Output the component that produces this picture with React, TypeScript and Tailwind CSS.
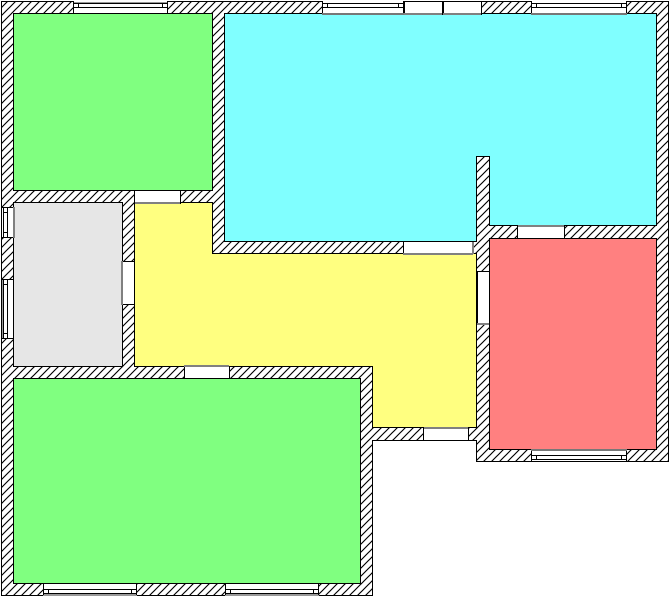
const hatchFill = 'url(#hatch)'

type Door = { x: number; y: number; w: number; h: number; grey: string }

// door openings: white gap with one grey jamb line
const doors: Door[] = [
  { x: 134, y: 190, w: 46, h: 13, grey: 'M135 203H180' },
  { x: 122, y: 261, w: 12, h: 43, grey: 'M122 261V305' },
  { x: 403, y: 241, w: 70, h: 12, grey: 'M403 254H473M473 242V254' },
  { x: 517, y: 225, w: 47, h: 13, grey: 'M518 226H564' },
  { x: 477, y: 271, w: 12, h: 53, grey: 'M477 324H489' },
  { x: 184, y: 366, w: 45, h: 12, grey: 'M184 366H229' },
  { x: 423, y: 428, w: 45, h: 12, grey: 'M424 428H468' },
  { x: 404, y: 1, w: 38, h: 13, grey: 'M404 14H442' },
  { x: 443, y: 1, w: 38, h: 13, grey: 'M443 14H481' },
]

const Window = ({ x, w, wall, inner, greyInner }: { x: number; w: number; wall: number; inner: number; greyInner?: boolean }) => {
  const dir = inner > wall ? 1 : -1
  const top = Math.min(wall, inner)
  const y = (n: number) => wall + dir * n + 0.5
  return (
    <g>
      <rect x={x} y={top} width={w} height={12} fill="#fff" />
      {greyInner ? (
        <path d={`M${x} ${y(2)}H${x + w}`} stroke="#000" />
      ) : (
        <path d={`M${x} ${y(1)}H${x + w}`} stroke="#999" strokeWidth={2} />
      )}
      <path d={`M${x} ${y(2)}H${x + w}M${x} ${y(6)}H${x + w}`} stroke="#000" />
      <path d={`M${x + 5.5} ${y(2)}V${y(6)}M${x + w - 5.5} ${y(2)}V${y(6)}`} stroke="#000" />
      <path d={`M${x + 0.5} ${top}V${top + 12}M${x + w - 0.5} ${top}V${top + 12}`} stroke="#000" />
      <path d={`M${x} ${y(12)}H${x + w}`} stroke={greyInner ? '#777' : '#000'} strokeWidth={greyInner ? 2 : 1} />
    </g>
  )
}

const SideWindow = ({ y, h, greyOuter }: { y: number; h: number; greyOuter?: boolean }) => (
  <g>
    <rect x={2} y={y} width={11} height={h} fill="#fff" />
    {greyOuter && <path d={`M3 ${y}V${y + h}`} stroke="#999" strokeWidth={2} />}
    <path d={`M3.5 ${y}V${y + h}M7.5 ${y}V${y + h}M2 ${y + 0.5}H13M2 ${y + h - 0.5}H13M3 ${y + 5.5}H8M3 ${y + h - 5.5}H8`} stroke="#000" fill="none" />
    {greyOuter ? (
      <path d={`M13.5 ${y}V${y + h}`} stroke="#000" />
    ) : (
      <path d={`M14 ${y}V${y + h}`} stroke="#808080" strokeWidth={2} />
    )}
  </g>
)

export default function App() {
  return (
    <div className="w-[670px] h-[597px] bg-white overflow-hidden">
      <svg width="670" height="597" viewBox="0 0 670 597" className="block" shapeRendering="crispEdges">
        <defs>
          <pattern id="hatch" width="8" height="8" patternUnits="userSpaceOnUse" patternTransform="translate(1 0)">
            <rect width="8" height="8" fill="#fff" />
            <path d="M0 8L8 0M-1 1L1 -1M7 9L9 7" stroke="#000" strokeWidth="1.2" shapeRendering="geometricPrecision" />
          </pattern>
        </defs>

        {/* walls */}
        <path d="M1.5 1.5H668.5V461.5H476.5V440.5H372.5V595.5H1.5Z" fill={hatchFill} stroke="#000" />

        {/* rooms */}
        <g stroke="#000">
          <rect x="13.5" y="13.5" width="199" height="177" fill="#80ff80" />
          <path d="M224.5 13.5H656.5V225.5H489.5V156.5H476.5V241.5H224.5Z" fill="#80ffff" />
          <path d="M134.5 202.5H212.5V253.5H476.5V427.5H372.5V366.5H134.5Z" fill="#ffff80" />
          <rect x="13.5" y="202.5" width="109" height="164" fill="#e6e6e6" />
          <rect x="13.5" y="378.5" width="347" height="205" fill="#80ff80" />
          <rect x="489.5" y="238.5" width="167" height="211" fill="#ff8080" />
        </g>

        {/* doors */}
        {doors.map((d, i) => (
          <g key={i}>
            <rect x={d.x + 0.5} y={d.y + 0.5} width={d.w} height={d.h} fill="#fff" stroke="#000" />
            <path d={d.grey} stroke="#808080" strokeWidth="2" fill="none" />
          </g>
        ))}

        {/* windows */}
        <Window x={73} w={95} wall={1} inner={13} />
        <Window x={322} w={82} wall={1} inner={13} greyInner />
        <Window x={531} w={96} wall={1} inner={13} greyInner />
        <Window x={531} w={96} wall={461} inner={449} greyInner />
        <Window x={43} w={94} wall={595} inner={583} />
        <Window x={225} w={94} wall={595} inner={583} />
        <SideWindow y={207} h={31} />
        <SideWindow y={279} h={60} greyOuter />
      </svg>
    </div>
  )
}
